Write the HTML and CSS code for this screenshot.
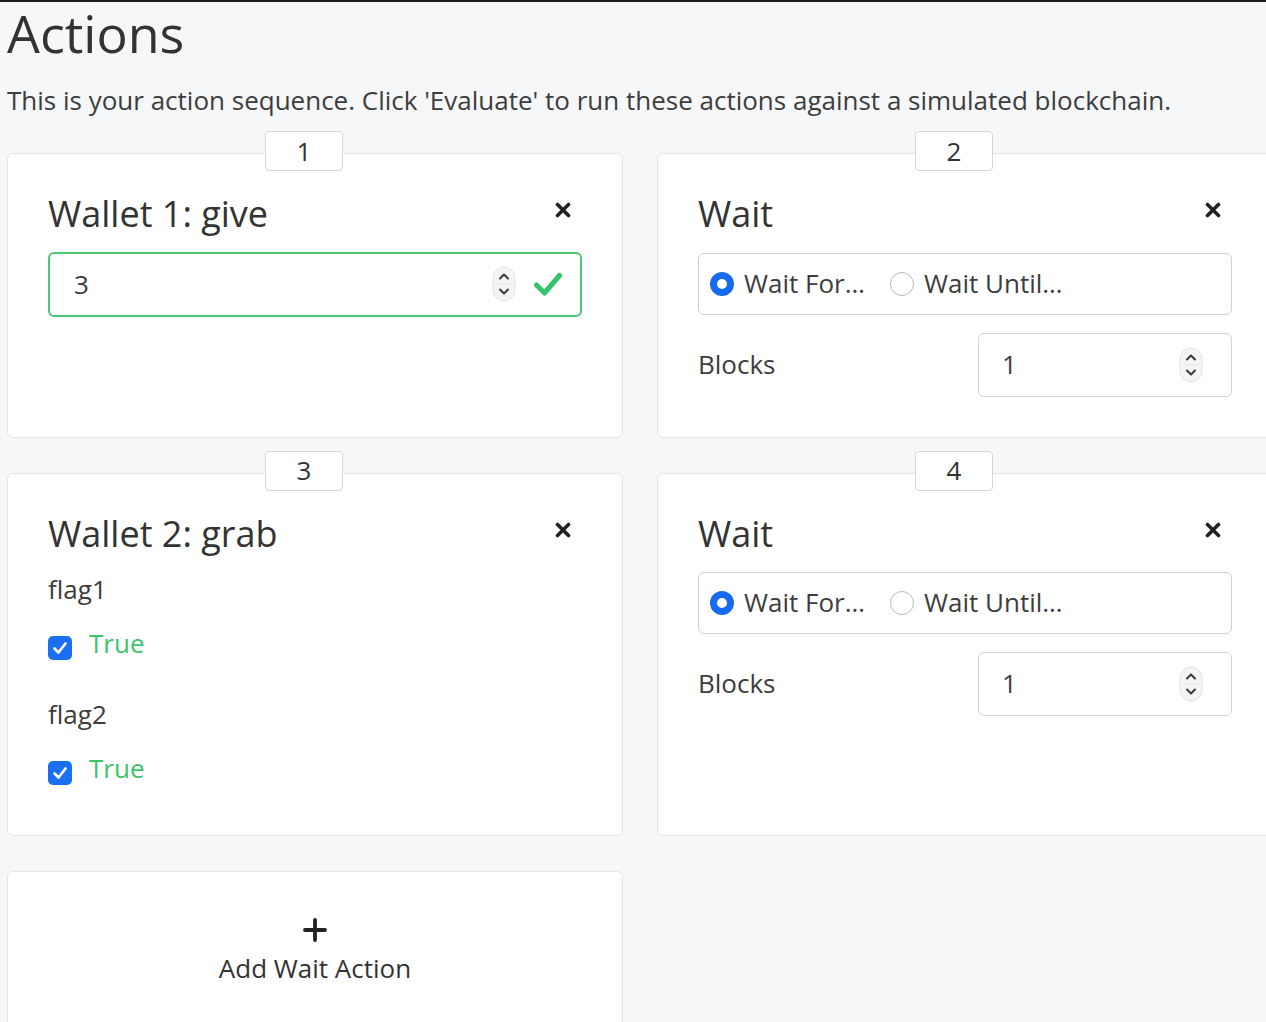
FILE: index.html
```html
<!DOCTYPE html>
<html lang="en">
<head>
<meta charset="utf-8">
<title>Actions</title>
<link rel="stylesheet" href="styles.css">
</head>
<body>
<div class="topbar"></div>
<main class="page">
  <h1 class="page-title">Actions</h1>
  <p class="lead">This is your action sequence. Click 'Evaluate' to run these actions against a simulated blockchain.</p>

  <div class="grid">
    <!-- 1 -->
    <section class="card">
      <span class="badge">1</span>
      <div class="card-head">
        <h3 class="card-title">Wallet 1: give</h3>
        <button class="close" aria-label="Remove">
          <svg width="16" height="16" viewBox="0 0 16 16"><path d="M2.5 2.5 L13.5 13.5 M13.5 2.5 L2.5 13.5" stroke="#222" stroke-width="3.6" stroke-linecap="round"/></svg>
        </button>
      </div>
      <div class="num-input valid">
        <span class="num-value">3</span>
        <svg class="spinner" width="24" height="36" viewBox="0 0 24 36"><rect x="1" y="1" width="22" height="34" rx="11" fill="#f4f4f4" stroke="#e2e2e2"/><line x1="4" y1="18" x2="20" y2="18" stroke="#e4e4e4"/><path d="M8 12.5 L12 8.5 L16 12.5" fill="none" stroke="#3a3a3a" stroke-width="2" stroke-linecap="round" stroke-linejoin="round"/><path d="M8 23.5 L12 27.5 L16 23.5" fill="none" stroke="#3a3a3a" stroke-width="2" stroke-linecap="round" stroke-linejoin="round"/></svg>
        <svg class="ok" width="30" height="28" viewBox="0 0 30 28"><path d="M3.5 15 L11.5 23 L26.5 5.5" fill="none" stroke="#34c26a" stroke-width="5" stroke-linecap="round" stroke-linejoin="round"/></svg>
      </div>
    </section>

    <!-- 2 -->
    <section class="card">
      <span class="badge">2</span>
      <div class="card-head">
        <h3 class="card-title">Wait</h3>
        <button class="close" aria-label="Remove">
          <svg width="16" height="16" viewBox="0 0 16 16"><path d="M2.5 2.5 L13.5 13.5 M13.5 2.5 L2.5 13.5" stroke="#222" stroke-width="3.6" stroke-linecap="round"/></svg>
        </button>
      </div>
      <div class="radio-box">
        <span class="radio checked"></span><span class="radio-label">Wait For…</span>
        <span class="radio"></span><span class="radio-label">Wait Until…</span>
      </div>
      <div class="blocks-row">
        <span class="field-label">Blocks</span>
        <div class="num-input small">
          <span class="num-value">1</span>
          <svg class="spinner" width="24" height="36" viewBox="0 0 24 36"><rect x="1" y="1" width="22" height="34" rx="11" fill="#f4f4f4" stroke="#e2e2e2"/><line x1="4" y1="18" x2="20" y2="18" stroke="#e4e4e4"/><path d="M8 12.5 L12 8.5 L16 12.5" fill="none" stroke="#3a3a3a" stroke-width="2" stroke-linecap="round" stroke-linejoin="round"/><path d="M8 23.5 L12 27.5 L16 23.5" fill="none" stroke="#3a3a3a" stroke-width="2" stroke-linecap="round" stroke-linejoin="round"/></svg>
        </div>
      </div>
    </section>

    <!-- 3 -->
    <section class="card">
      <span class="badge">3</span>
      <div class="card-head">
        <h3 class="card-title">Wallet 2: grab</h3>
        <button class="close" aria-label="Remove">
          <svg width="16" height="16" viewBox="0 0 16 16"><path d="M2.5 2.5 L13.5 13.5 M13.5 2.5 L2.5 13.5" stroke="#222" stroke-width="3.6" stroke-linecap="round"/></svg>
        </button>
      </div>
      <div class="flag">
        <div class="field-label">flag1</div>
        <div class="check-row">
          <span class="checkbox"><svg width="24" height="24" viewBox="0 0 24 24"><path d="M6.5 12.5 L10.5 16.5 L17.5 7.5" fill="none" stroke="#fff" stroke-width="2.6" stroke-linecap="round" stroke-linejoin="round"/></svg></span>
          <span class="true">True</span>
        </div>
      </div>
      <div class="flag last">
        <div class="field-label">flag2</div>
        <div class="check-row">
          <span class="checkbox"><svg width="24" height="24" viewBox="0 0 24 24"><path d="M6.5 12.5 L10.5 16.5 L17.5 7.5" fill="none" stroke="#fff" stroke-width="2.6" stroke-linecap="round" stroke-linejoin="round"/></svg></span>
          <span class="true">True</span>
        </div>
      </div>
    </section>

    <!-- 4 -->
    <section class="card">
      <span class="badge">4</span>
      <div class="card-head">
        <h3 class="card-title">Wait</h3>
        <button class="close" aria-label="Remove">
          <svg width="16" height="16" viewBox="0 0 16 16"><path d="M2.5 2.5 L13.5 13.5 M13.5 2.5 L2.5 13.5" stroke="#222" stroke-width="3.6" stroke-linecap="round"/></svg>
        </button>
      </div>
      <div class="radio-box">
        <span class="radio checked"></span><span class="radio-label">Wait For…</span>
        <span class="radio"></span><span class="radio-label">Wait Until…</span>
      </div>
      <div class="blocks-row">
        <span class="field-label">Blocks</span>
        <div class="num-input small">
          <span class="num-value">1</span>
          <svg class="spinner" width="24" height="36" viewBox="0 0 24 36"><rect x="1" y="1" width="22" height="34" rx="11" fill="#f4f4f4" stroke="#e2e2e2"/><line x1="4" y1="18" x2="20" y2="18" stroke="#e4e4e4"/><path d="M8 12.5 L12 8.5 L16 12.5" fill="none" stroke="#3a3a3a" stroke-width="2" stroke-linecap="round" stroke-linejoin="round"/><path d="M8 23.5 L12 27.5 L16 23.5" fill="none" stroke="#3a3a3a" stroke-width="2" stroke-linecap="round" stroke-linejoin="round"/></svg>
        </div>
      </div>
    </section>

    <!-- add -->
    <section class="card add-card">
      <svg class="plus" width="24" height="24" viewBox="0 0 24 24"><path d="M12 2 V22 M2 12 H22" stroke="#222" stroke-width="3.8" stroke-linecap="round"/></svg>
      <span class="add-label">Add Wait Action</span>
    </section>
  </div>
</main>
</body>
</html>
```

FILE: styles.css
```css
html, body {
  margin: 0;
  padding: 0;
  overflow: hidden;
  background: #f6f7f9;
}

body {
  font-family: "Open Sans", "Noto Sans", sans-serif;
  font-size: 26px;
  line-height: 1.5;
  color: #3d3d3d;
}

.topbar {
  height: 2px;
  background: #1c1c1c;
}

.page {
  padding: 0 7px;
}

.page-title {
  margin: 0;
  font-size: 52px;
  font-weight: 400;
  line-height: 1.2;
  color: #333;
}

.lead {
  margin: 17px 0 0;
  white-space: nowrap;
}

.grid {
  margin-top: 33px;
  display: grid;
  grid-template-columns: 616px 616px;
  column-gap: 34px;
  row-gap: 35px;
}

.card {
  position: relative;
  background: #fff;
  border: 1px solid #e3e5e9;
  border-radius: 6px;
  padding: 38px 40px 40px;
}

.badge {
  position: absolute;
  top: -23px;
  left: 257px;
  width: 78px;
  height: 40px;
  box-sizing: border-box;
  display: flex;
  align-items: center;
  justify-content: center;
  background: #fff;
  border: 1px solid #d3d6db;
  border-radius: 4px;
  font-size: 26px;
  color: #333;
}

.card-head {
  display: flex;
  justify-content: space-between;
  align-items: flex-start;
  margin-bottom: 17px;
}

.card-title {
  margin: 0;
  font-size: 36px;
  font-weight: 400;
  line-height: 1.2;
  color: #333;
}

.close {
  margin: 10px 11px 0 0;
  padding: 0;
  border: 0;
  background: none;
  display: flex;
}

.num-input {
  display: flex;
  align-items: center;
  height: 65px;
  box-sizing: border-box;
  border: 1px solid #cfd3d8;
  border-radius: 6px;
  padding: 0 0 0 25px;
}

.num-input.valid {
  border: 2px solid #4ac776;
  padding-left: 24px;
  margin-top: -1px;
}

.num-value {
  flex: 1;
  color: #3d3d3d;
}

.num-input.valid .spinner {
  margin-right: 17px;
}

.num-input.valid .ok {
  margin-right: 17px;
}

.radio-box {
  display: flex;
  align-items: center;
  height: 62px;
  box-sizing: border-box;
  border: 1px solid #cfcfcf;
  border-radius: 6px;
  padding-left: 11px;
}

.radio {
  width: 24px;
  height: 24px;
  box-sizing: border-box;
  border-radius: 50%;
  border: 1px solid #b9b9b9;
  background: #fff;
  margin-right: 10px;
}

.radio.checked {
  border: 7.5px solid #1769f0;
}

.radio-label {
  margin-right: 25px;
}

.blocks-row {
  margin-top: 18px;
  display: flex;
  justify-content: space-between;
  align-items: center;
}

.num-input.small {
  width: 254px;
  height: 64px;
  padding-left: 23px;
}

.num-input.small .spinner {
  margin-right: 28px;
}

.field-label {
  color: #3d3d3d;
}

.flag {
  margin-top: -2px;
}

.flag + .flag {
  margin-top: 32px;
}

.flag.last {
  margin-bottom: 7px;
}

.check-row {
  margin-top: 15px;
  display: flex;
  align-items: flex-start;
}

.checkbox {
  width: 24px;
  height: 24px;
  border-radius: 5px;
  background: #1b6ff2;
  display: flex;
  margin: 12px 17px 0 0;
}

.true {
  color: #3cc46d;
}

.add-card {
  display: flex;
  flex-direction: column;
  align-items: center;
  padding: 46px 40px 60px;
  min-height: 140px;
}

.plus {
  display: block;
}

.add-label {
  margin-top: 7px;
  color: #333;
}
```
